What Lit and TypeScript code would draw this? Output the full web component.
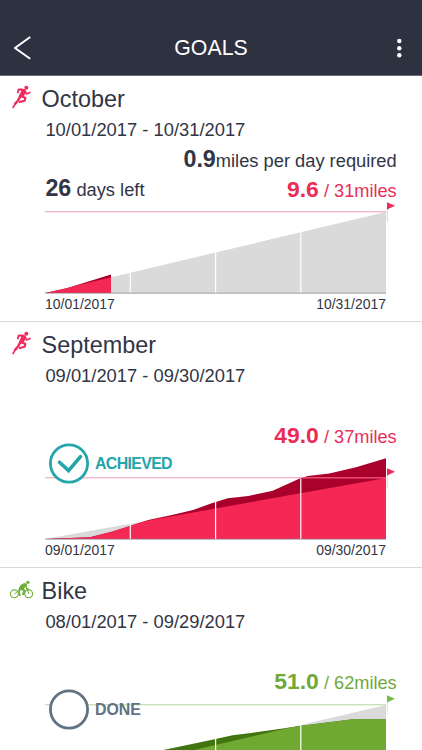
import { LitElement, html, svg, css, nothing } from "lit";
import { customElement, property } from "lit/decorators.js";

type Point = [number, number];

interface Goal {
  sport: "run" | "bike";
  title: string;
  from: string;
  to: string;
  perDay?: string;
  daysLeft?: string;
  status?: "ACHIEVED" | "DONE";
  done: string;
  target: string;
  targetY: number;
  points: Point[];
}

const GOALS: Goal[] = [
  {
    sport: "run",
    title: "October",
    from: "10/01/2017",
    to: "10/31/2017",
    perDay: "0.9",
    daysLeft: "26",
    done: "9.6",
    target: "31",
    targetY: 12,
    points: [[0, 93], [21.7, 88.2], [43.3, 81.5], [66, 74.5]],
  },
  {
    sport: "run",
    title: "September",
    from: "09/01/2017",
    to: "09/30/2017",
    status: "ACHIEVED",
    done: "49.0",
    target: "37",
    targetY: 32,
    points: [
      [0, 93], [45, 91.3], [66.7, 85.7], [85, 80], [103.3, 74], [128, 68.7],
      [148, 64], [166, 57.5], [182.7, 52.3], [203.3, 50], [227.7, 44.7],
      [255.3, 32.3], [262.7, 30], [284.3, 27.5], [311, 21.3], [341, 12.3],
    ],
  },
  {
    sport: "bike",
    title: "Bike",
    from: "08/01/2017",
    to: "09/29/2017",
    status: "DONE",
    done: "51.0",
    target: "62",
    targetY: 13,
    points: [
      [0, 93], [60, 71], [118.3, 58], [166, 48], [187.7, 43.3], [206, 41],
      [236, 36.7], [256, 33.8], [307.7, 27.3], [341, 27.3],
    ],
  },
];

const runIcon = html`
  <svg width="20" height="24" viewBox="36 254 60 72" fill="none" stroke="currentColor" stroke-linejoin="round">
    <circle cx="79" cy="262.5" r="6" fill="currentColor" stroke="none" />
    <path d="M53 279 L56 267 L73 269" stroke-width="5.5" />
    <path d="M74 271 L80 281 L92 276" stroke-width="5" />
    <path d="M61 266 L75 268 L77 274 L70 288 L57 289 L65 273 Z" fill="currentColor" stroke-width="3" />
    <path d="M62 288 L76 292 L74 301 L57 306" stroke-width="6.5" />
    <path d="M61 288 L53 302 L44 312" stroke-width="7.5" />
    <path d="M50 304 L38 323" stroke-width="5" />
  </svg>
`;

const bikeIcon = html`
  <svg width="25" height="20" viewBox="28 44 74 60" fill="none" stroke="currentColor" stroke-linejoin="round">
    <circle cx="43.5" cy="85.5" r="11.8" stroke-width="3.4" />
    <circle cx="86.5" cy="85.5" r="11.8" stroke-width="3.4" />
    <circle cx="84" cy="51" r="5" fill="currentColor" stroke="none" />
    <path d="M80 57 L74 54 L62 61 L58 72 L66 74 L75 66 Z" fill="currentColor" stroke-width="3" />
    <path d="M78 57 L80 70 L87 71" stroke-width="4" />
    <path d="M60 68 L58 78 L60 92" stroke-width="5" />
    <path d="M64 70 L74 75 L69 89" stroke-width="6" />
    <path d="M44 86 L58 74 M82 70 L87 86" stroke-width="3" />
  </svg>
`;

@customElement("goal-chart")
class GoalChart extends LitElement {
  @property({ attribute: false }) goal!: Goal;

  static styles = css`
    :host { display: block; height: 94px; }
    svg { display: block; overflow: visible; }
    .rest { fill: #dadada; }
    .ahead { fill: var(--deep); }
    .actual { fill: var(--fill); }
    .goal-line { stroke: var(--line); stroke-width: 1; }
    .over { stroke: var(--fill); stroke-width: 1; opacity: 0.75; }
    .base { stroke: #8c8288; stroke-width: 1; opacity: 0.75; }
    .tick { stroke: #fff; stroke-width: 1.2; }
    .flag { fill: var(--flag); }
    .pole { stroke: var(--flag); stroke-width: 0.8; stroke-dasharray: 1.2 1; opacity: 0.6; }
  `;

  render() {
    const { points, targetY: y } = this.goal;
    const last = points[points.length - 1][0];
    const area = `M${points.map((p) => p.join(" ")).join("L")}L${last} 93Z`;
    return html`
      <svg width="352" height="94" viewBox="0 0 352 94">
        <clipPath id="plan"><path d="M0 93L341 ${y}V94H0Z" /></clipPath>
        <clipPath id="done"><path d=${area} /></clipPath>
        <path class="rest" d="M0 93L341 ${y}V93Z" />
        <path class="ahead" d=${area} />
        <path class="actual" d=${area} clip-path="url(#plan)" />
        ${[85.3, 170.6, 255.8].map((x) => svg`<line class="tick" x1=${x} x2=${x} y1=${y + 0.5} y2="93" />`)}
        <line class="base" x1="0" x2="341" y1="93.2" y2="93.2" />
        <line class="goal-line" x1="0" x2="341" y1=${y - 0.2} y2=${y - 0.2} />
        <g clip-path="url(#done)"><line class="over" x1="0" x2="341" y1=${y - 0.2} y2=${y - 0.2} /></g>
        <line class="pole" x1="342.3" x2="342.3" y1=${y - 3} y2=${y + 10} />
        <path class="flag" d="M342 ${y - 9.7}L350 ${y - 6.2}L342 ${y - 2.6}Z" />
      </svg>
    `;
  }
}

@customElement("goal-card")
class GoalCard extends LitElement {
  @property({ attribute: false }) goal!: Goal;

  static styles = css`
    :host { display: block; }
    .card {
      box-sizing: border-box;
      height: 246px;
      border-bottom: 1px solid #d9d9da;
      position: relative;
      --flag: #f0285a;
      --fill: #f52754;
      --deep: #aa002c;
      --line: #f19bb1;
      --text: #ea2d58;
    }
    .card.bike {
      --flag: #7aba45;
      --fill: #70a932;
      --deep: #417510;
      --line: #b5d699;
      --text: #71a93a;
    }
    .head { display: flex; height: 46px; }
    .icon { width: 41.6px; box-sizing: border-box; padding: 8.5px 0 0 12px; color: #ee2c5c; }
    .bike .icon { color: #6dae35; padding: 11.7px 0 0 9.3px; }
    .icon svg { display: block; }
    .title { font-size: 23.4px; line-height: 46px; }
    .dates { font-size: 18.35px; line-height: 22px; height: 26px; margin: -3px 0 0 45.4px; }
    .need, .stats {
      display: flex;
      align-items: baseline;
      font-size: 18.3px;
      line-height: 28px;
      padding: 0 25.3px 0 45.4px;
      white-space: pre;
    }
    .need { height: 29px; justify-content: flex-end; }
    .stats { height: 26px; justify-content: space-between; }
    b { font-size: 23.3px; }
    .amount { color: var(--text); margin-left: auto; padding-top: 1px; font-size: 18.2px; }
    .stats { align-items: flex-start; }
    .amount b { font-size: 22.9px; }
    goal-chart { margin-left: 45px; }
    .range {
      display: flex;
      justify-content: space-between;
      font-size: 13.95px;
      line-height: 16px;
      padding: 2px 36px 0 45px;
    }
    .badge {
      position: absolute;
      left: 49px;
      top: 121px;
      display: flex;
      align-items: center;
      gap: 6px;
      font-size: 15.9px;
      font-weight: bold;
      color: #607284;
    }
    .badge.ok { color: #23a5aa; letter-spacing: -0.65px; }
    .badge svg { display: block; }
  `;

  render() {
    const g = this.goal;
    return html`
      <section class="card ${g.sport}">
        <div class="head">
          <div class="icon">${g.sport === "run" ? runIcon : bikeIcon}</div>
          <div class="title">${g.title}</div>
        </div>
        <div class="dates">${g.from} - ${g.to}</div>
        <div class="need">${g.perDay ? html`<b>${g.perDay}</b><span>miles per day required</span>` : nothing}</div>
        <div class="stats">
          ${g.daysLeft ? html`<span><b>${g.daysLeft}</b> days left</span>` : nothing}
          <span class="amount"><b>${g.done}</b> / ${g.target}miles</span>
        </div>
        <goal-chart .goal=${g}></goal-chart>
        <div class="range"><span>${g.from}</span><span>${g.to}</span></div>
        ${g.status
          ? html`<div class="badge ${g.status === "ACHIEVED" ? "ok" : ""}">
              <svg width="40" height="41" viewBox="0 0 40 41" fill="none" stroke="currentColor">
                <circle cx="20" cy="20.5" r="18.6" fill="#fff" stroke-width="2.8" />
                ${g.status === "ACHIEVED"
                  ? svg`<path d="M10.5 19.2L19.6 27.6L31.5 13.6" stroke-width="3.6" stroke-linecap="round" />`
                  : nothing}
              </svg>
              <span>${g.status}</span>
            </div>`
          : nothing}
      </section>
    `;
  }
}

@customElement("app-root")
class AppRoot extends LitElement {
  static styles = css`
    :host {
      display: block;
      height: 750px;
      overflow: hidden;
      background: #fff;
      color: #323545;
      font-family: "Liberation Sans", Arial, sans-serif;
    }
    .bar {
      box-sizing: border-box;
      height: 76px;
      padding: 21px 15px 0 14px;
      display: grid;
      grid-template-columns: 41px 1fr 40px;
      align-items: center;
      background: #2d3140;
      border-bottom: 1px solid #6a6b78;
      color: #fff;
    }
    .bar h1 {
      margin: 0;
      font-size: 21.3px;
      font-weight: normal;
      line-height: 26px;
      text-align: center;
    }
    .bar svg { display: block; }
    .more { justify-self: end; }
  `;

  render() {
    return html`
      <header class="bar">
        <svg width="20" height="24" viewBox="1 0 20 24" fill="none" stroke="currentColor" stroke-width="2">
          <path d="M17.2 1L2 12L17.2 22.7" />
        </svg>
        <h1>GOALS</h1>
        <svg class="more" width="14" height="20" viewBox="0 0 14 20" fill="currentColor">
          <circle cx="6.3" cy="3" r="2.2" />
          <circle cx="6.3" cy="10.2" r="2.2" />
          <circle cx="6.3" cy="17.3" r="2.2" />
        </svg>
      </header>
      <main>${GOALS.map((g) => html`<goal-card .goal=${g}></goal-card>`)}</main>
    `;
  }
}
